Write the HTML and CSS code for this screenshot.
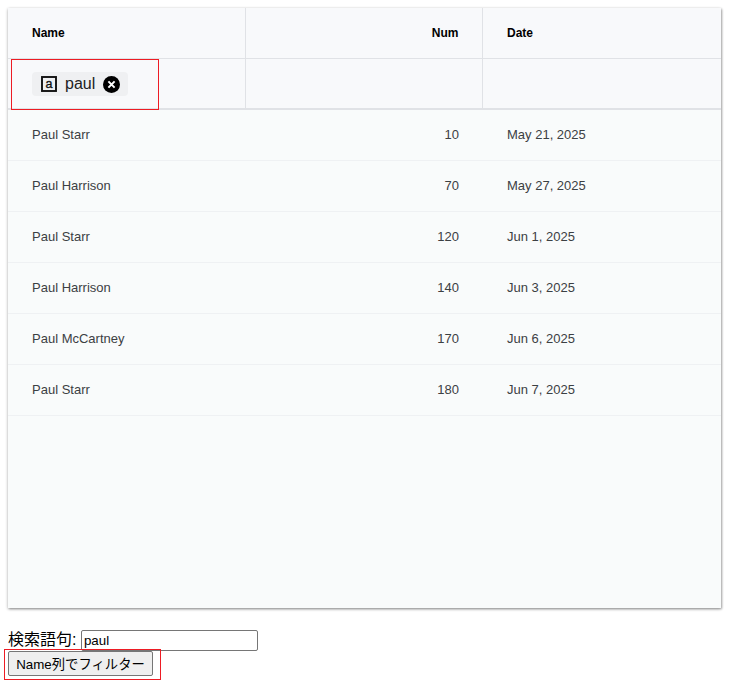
FILE: index.html
```html
<!DOCTYPE html>
<html lang="ja">
<head>
<meta charset="utf-8">
<title>Grid</title>
<link rel="stylesheet" href="styles.css">
</head>
<body>
<div class="grid">
  <div class="head-row">
    <div class="cell head sep">Name</div>
    <div class="cell head sep right">Num</div>
    <div class="cell head">Date</div>
  </div>
  <div class="filter-row">
    <div class="cell filter sep">
      <span class="chip">
        <svg class="chip-icon" width="16" height="16" viewBox="0 0 16 16"><rect x="1" y="1" width="14" height="14" fill="none" stroke="#111" stroke-width="1.9"/><text x="8" y="12.2" text-anchor="middle" class="chip-a">a</text></svg>
        <span class="chip-text">paul</span>
        <svg class="chip-x" width="17" height="17" viewBox="0 0 17 17"><circle cx="8.5" cy="8.5" r="8.5" fill="#000"/><path d="M5.4 5.4l6.2 6.2M11.6 5.4l-6.2 6.2" stroke="#fff" stroke-width="2" fill="none"/></svg>
      </span>
    </div>
    <div class="cell filter sep"></div>
    <div class="cell filter"></div>
  </div>
  <div class="row"><div class="cell">Paul Starr</div><div class="cell right">10</div><div class="cell">May 21, 2025</div></div>
  <div class="row"><div class="cell">Paul Harrison</div><div class="cell right">70</div><div class="cell">May 27, 2025</div></div>
  <div class="row"><div class="cell">Paul Starr</div><div class="cell right">120</div><div class="cell">Jun 1, 2025</div></div>
  <div class="row"><div class="cell">Paul Harrison</div><div class="cell right">140</div><div class="cell">Jun 3, 2025</div></div>
  <div class="row"><div class="cell">Paul McCartney</div><div class="cell right">170</div><div class="cell">Jun 6, 2025</div></div>
  <div class="row"><div class="cell">Paul Starr</div><div class="cell right">180</div><div class="cell">Jun 7, 2025</div></div>
</div>
<div class="controls">
  <label class="search-label" for="q">検索語句:</label>
  <input id="q" class="search-input" type="text" value="paul">
  <br>
  <button class="filter-btn" type="button">Name列でフィルター</button>
</div>
<div class="mark mark-chip"></div>
<div class="mark mark-btn"></div>
</body>
</html>
```
FILE: styles.css
```css
html, body { margin: 0; padding: 0; background: #fff; }
body {
  padding: 8px;
  height: 687px;
  box-sizing: border-box;
  overflow: hidden;
  font-family: "Liberation Sans", "Noto Sans CJK JP", sans-serif;
  position: relative;
}
.grid {
  width: 713px;
  height: 600px;
  background: #f9fbfb;
  box-shadow: 0 1px 3px rgba(0,0,0,0.32), 1px 1px 2px rgba(0,0,0,0.24);
  font-size: 13px;
  color: #3c4043;
}
.head-row, .filter-row, .row {
  display: grid;
  grid-template-columns: 238px 237px 1fr;
  box-sizing: border-box;
}
.head-row { height: 51px; background: #f8f9fb; border-bottom: 1px solid #e0e2e6; }
.filter-row { height: 51px; background: #f8f9fb; border-bottom: 2px solid #e0e2e6; }
.row { height: 51px; border-bottom: 1px solid #eff1f3; }
.row .cell { padding-bottom: 2px; }
.cell {
  display: flex;
  align-items: center;
  padding: 0 24px;
  box-sizing: border-box;
  min-width: 0;
}
.sep { border-right: 1px solid #e0e2e6; }
.right { justify-content: flex-end; }
.head { font-size: 12px; font-weight: bold; color: #000; }
.head.right { padding-right: 23.5px; }
.filter { padding-top: 1px; }
.chip {
  display: flex;
  align-items: center;
  height: 24px;
  padding: 0 8px 0 9px;
  background: #eff0f2;
  border-radius: 4px;
  box-sizing: border-box;
  width: 96px;
}
.chip-icon { flex: none; }
.chip-a { font-family: "Liberation Sans", sans-serif; font-size: 12.5px; fill: #111; stroke: #111; stroke-width: 0.35px; }
.chip-text { margin-left: 8px; font-size: 16px; color: #222; }
.chip-x { flex: none; margin-left: 8px; }
.controls { margin-top: 22px; font-size: 16px; color: #000; line-height: 20px; }
.search-label { font-family: "Liberation Sans", "Noto Sans CJK JP", sans-serif; }
.search-input {
  width: 177px;
  height: 21px;
  box-sizing: border-box;
  padding: 1px 2px;
  border: 1px solid #767676;
  border-radius: 2px;
  font-family: "Liberation Sans", sans-serif;
  font-size: 13.33px;
  font-weight: 500;
  vertical-align: baseline;
}
.filter-btn {
  display: block;
  width: 145px;
  height: 25px;
  padding: 1px 6px;
  margin-top: 0;
  background: #efefef;
  border: 1px solid #767676;
  border-radius: 2px;
  font-family: "Liberation Sans", "Noto Sans CJK JP", sans-serif;
  font-size: 13.33px;
  color: #000;
  white-space: nowrap;
}
.mark { position: absolute; border: 1px solid #ed1c24; box-sizing: border-box; }
.mark-chip { left: 11px; top: 59px; width: 148px; height: 51px; }
.mark-btn { left: 4px; top: 649px; width: 157px; height: 31px; }
```
